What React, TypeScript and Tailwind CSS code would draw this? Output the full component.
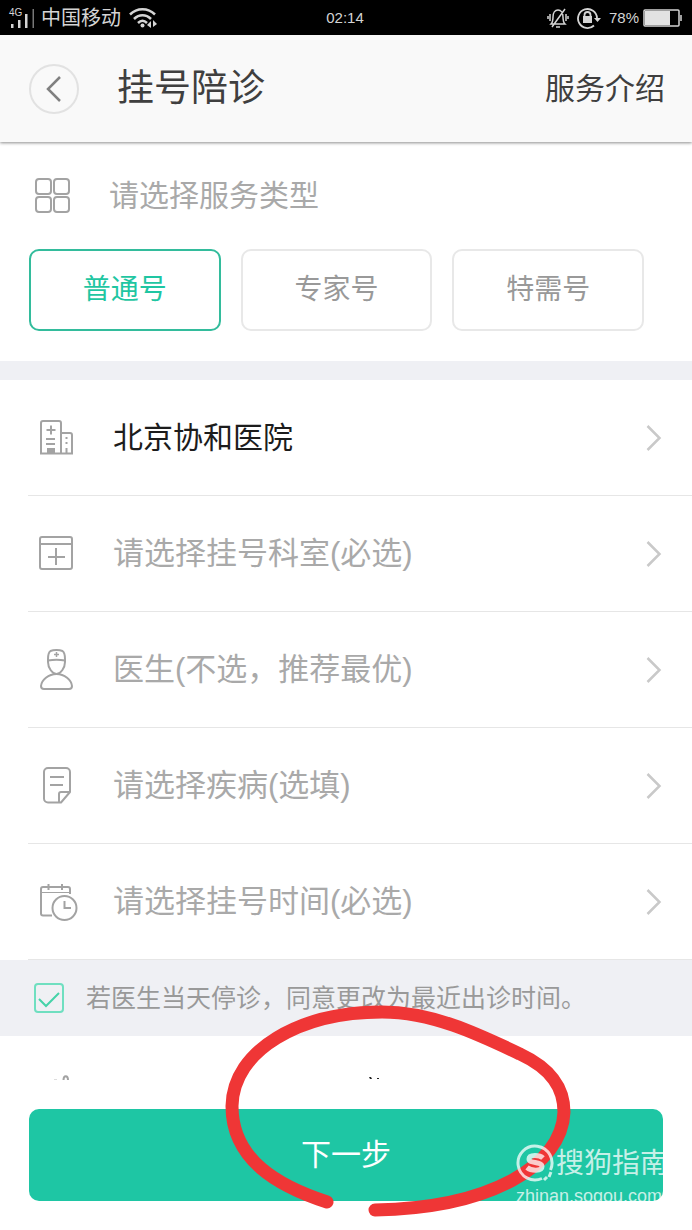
import React, { useState } from 'react'

const SERVICE_TYPES = ['普通号', '专家号', '特需号']

const GridIcon = () => (
  <svg width="36" height="36" viewBox="0 0 36 36" fill="none" stroke="#a3a3a3" strokeWidth="2">
    <rect x="1" y="1" width="15" height="15" rx="3" />
    <rect x="19" y="1" width="15" height="15" rx="3" />
    <rect x="1" y="19" width="15" height="15" rx="3" />
    <rect x="19" y="19" width="15" height="15" rx="3" />
  </svg>
)

const HospitalIcon = () => (
  <svg width="42" height="44" viewBox="0 0 42 44" fill="none" stroke="#a3a3a3" strokeWidth="2">
    <path d="M5 37.500V7a2 2 0 0 1 2-2h16a2 2 0 0 1 2 2v30.500M25 17h9a2 2 0 0 1 2 2v18.500M4 37.500h33" />
    <path d="M15 9.500v9M10.500 14h9M10 23h9M10 28h9" />
    <path d="M11 32h8v5h-8z" fill="#a3a3a3" stroke="none" />
    <path d="M30.500 21v2M30.500 26v2M30.500 32v5" />
  </svg>
)

const DepartmentIcon = () => (
  <svg width="42" height="44" viewBox="0 0 42 44" fill="none" stroke="#a3a3a3" strokeWidth="2">
    <rect x="4" y="5" width="32" height="32" rx="2" />
    <path d="M4 12h32M20 16v17M12 25h17" />
  </svg>
)

const DoctorIcon = () => (
  <svg width="42" height="44" viewBox="0 0 42 44" fill="none" stroke="#a3a3a3" strokeWidth="2">
    <path d="M12 11c0-3 1-7 2.500-8 3-1.200 9-1.200 12 0 1.500 1 2.500 5 2.500 8v3c0 6-4.500 12-8.500 12S12 20 12 14z" />
    <path d="M12 12.500c5-1 12-1 17 0" />
    <path d="M20.500 4v5M18 6.500h5" strokeWidth="1.500" />
    <path d="M20.500 26c8 0 15 6 15.500 12 0 2-1 3-3 3H8c-2 0-3-1-3-3 .500-6 7.500-12 15.500-12z" />
  </svg>
)

const DiseaseIcon = () => (
  <svg width="42" height="44" viewBox="0 0 42 44" fill="none" stroke="#a3a3a3" strokeWidth="2">
    <path d="M23 38.500H12a4 4 0 0 1-4-4V8a4 4 0 0 1 4-4h18a4 4 0 0 1 4 4v20l-9 10.500z" strokeLinejoin="round" />
    <path d="M23 38.500V30a2 2 0 0 1 2-2h9M14 13h14M14 21h13" />
  </svg>
)

const TimeIcon = () => (
  <svg width="42" height="44" viewBox="0 0 42 44" fill="none" stroke="#a3a3a3" strokeWidth="2">
    <path d="M16 35.500H7a2 2 0 0 1-2-2V9a2 2 0 0 1 2-2h25a2 2 0 0 1 2 2v5" />
    <path d="M12.500 4v6M26 4v6" />
    <path d="M5 12.500h29" strokeWidth="1" />
    <circle cx="28.500" cy="28" r="12" />
    <path d="M28.500 21v7H35" />
  </svg>
)

const Chevron = () => (
  <svg width="16" height="28" viewBox="0 0 16 28" fill="none" stroke="#c9c9c9" strokeWidth="2.500">
    <path d="M1.500 2L13.500 14 1.500 26" />
  </svg>
)

const FIELDS = [
  { label: '北京协和医院', icon: HospitalIcon, filled: true },
  { label: '请选择挂号科室(必选)', icon: DepartmentIcon, filled: false },
  { label: '医生(不选，推荐最优)', icon: DoctorIcon, filled: false },
  { label: '请选择疾病(选填)', icon: DiseaseIcon, filled: false },
  { label: '请选择挂号时间(必选)', icon: TimeIcon, filled: false },
]

const StatusBar = () => (
  <div className="grid h-[35px] grid-cols-[1fr_auto_1fr] items-center bg-black pl-2 pr-[10px] text-[#d4d4d4]">
    <div className="flex items-center">
      <svg width="28" height="22" viewBox="0 0 28 22" fill="#d4d4d4">
        <text x="1" y="9" fontSize="10" fontFamily="Liberation Sans, sans-serif">4G</text>
        <path d="M3 17h2.500v4H3zM10 13h2.500v8H10zM17 7h2.500v14H17z" />
        <path d="M24.500 2h1.500v19h-1.500z" fill="#777" />
      </svg>
      <span className="ml-[5px] text-[20px] leading-6">中国移动</span>
      <svg className="ml-2" width="30" height="22" viewBox="0 0 30 22" fill="none" stroke="#d4d4d4" strokeWidth="2.500">
        <path d="M1 7.500c7-7 18-7 25 0M5 12c5-5 12-5 17 0M9 16c3-3 6-3 9 0" />
        <circle cx="13.500" cy="18.500" r="2" fill="#d4d4d4" stroke="none" />
        <path d="M22 14v7l-4-3zM24 13v7l4-3z" fill="#d4d4d4" stroke="none" />
      </svg>
    </div>
    <span className="text-[15px] leading-6">02:14</span>
    <div className="flex items-center justify-end">
      <svg width="22" height="22" viewBox="0 0 22 22" fill="none" stroke="#d4d4d4" strokeWidth="1.500">
        <path d="M4 17c2-2 2-4 2-7 0-4 2-7 5-7s5 3 5 7c0 3 0 5 2 7zM9 20h4M18 2L5 20M3 7v7M1 9v3M19 7v7M21 9v3" />
      </svg>
      <svg className="ml-2" width="24" height="22" viewBox="0 0 24 22" fill="none" stroke="#d4d4d4" strokeWidth="1.800">
        <path d="M17 18.500A9.500 9.500 0 1 1 20 11" />
        <path d="M17 11h7l-3.500 4z" fill="#d4d4d4" stroke="none" />
        <path d="M7.500 9V8a3 3 0 0 1 6 0v1" />
        <path d="M6 9h9v7H6z" fill="#d4d4d4" stroke="none" />
      </svg>
      <span className="ml-2 text-[15px] leading-6">78%</span>
      <svg className="ml-1" width="39" height="18" viewBox="0 0 39 18" fill="none" stroke="#d4d4d4" strokeWidth="1.500">
        <rect x="1" y="1" width="35" height="16" rx="1" />
        <path d="M2 2h25v14H2z" fill="#e2e2e2" stroke="none" />
        <path d="M38 6v6" />
      </svg>
    </div>
  </div>
)

const Watermark = () => (
  <div className="pointer-events-none absolute bottom-[22px] right-6 w-[152px] text-white/75">
    <div className="flex items-center">
      <svg className="shrink-0" width="38" height="40" viewBox="0 0 38 40" fill="none" stroke="currentColor">
        <path d="M26 34.500A17 17 0 1 1 34.500 26" strokeWidth="3" />
        <path d="M27 14c-3-3-14-4-14 1 0 5 13 2 13 7.500 0 5-11 4.500-15 1" strokeWidth="5" />
        <path d="M35 28l-2 5M31 33l-3 3" strokeWidth="3" />
      </svg>
      <span className="ml-[2px] whitespace-nowrap text-[28px] leading-10">搜狗指南</span>
    </div>
    <div className="text-[18px] leading-6">zhinan.sogou.com</div>
  </div>
)

const App: React.FC = () => {
  const [type, setType] = useState(0)
  const [agreed, setAgreed] = useState(true)

  return (
    <div className="relative flex min-h-screen flex-col bg-white font-['Liberation_Sans','Noto_Sans_CJK_SC',sans-serif]">
      <StatusBar />

      <header className="z-10 flex h-[107px] items-center bg-[#f9f9f9] pl-[29px] pr-[27px] text-[#3f3f3f] shadow-[0_1px_3px_rgba(0,0,0,0.45)]">
        <button aria-label="返回" className="flex size-[50px] items-center justify-center rounded-full border-2 border-[#e2e2e2]">
          <svg width="16" height="26" viewBox="0 0 16 26" fill="none" stroke="#808080" strokeWidth="2.500">
            <path d="M14 1L2 13l12 12" />
          </svg>
        </button>
        <h1 className="ml-[38px] text-[37px] leading-[48px]">挂号陪诊</h1>
        <a href="#intro" className="ml-auto text-[30px] leading-9">服务介绍</a>
      </header>

      <main className="flex flex-1 flex-col">
        <section className="pb-[30px] pt-9">
          <div className="flex items-center pl-[35px]">
            <GridIcon />
            <h2 className="ml-[38px] text-[30px] leading-9 text-[#a9a9a9]">请选择服务类型</h2>
          </div>
          <div className="mt-[35px] grid grid-cols-3 gap-5 pl-[29px] pr-12">
            {SERVICE_TYPES.map((name, i) => (
              <button
                key={name}
                onClick={() => setType(i)}
                aria-pressed={type === i}
                className={`h-[82px] rounded-[10px] border-2 text-[28px] leading-9 ${
                  type === i ? 'border-[#33bc9c] text-[#1fc6a2]' : 'border-[#e8e8e8] text-[#999]'
                }`}
              >
                {name}
              </button>
            ))}
          </div>
        </section>

        <div className="h-[19px] bg-[#eff0f4]" />

        <ul className="pl-7">
          {FIELDS.map(({ label, icon: Icon, filled }) => (
            <li key={label} className="border-b border-[#e6e6e6]">
              <button className="flex h-[115px] w-full items-center pl-2 pr-[30px]">
                <Icon />
                <span
                  className={`ml-[35px] ${
                    filled ? 'text-[30px] leading-9 text-[#1c1c1c]' : 'text-[31px] leading-9 text-[#a9a9a9]'
                  }`}
                >
                  {label}
                </span>
                <span className="ml-auto">
                  <Chevron />
                </span>
              </button>
            </li>
          ))}
        </ul>

        <label className="flex h-[76px] items-center bg-[#eff0f4] pl-[34px] text-[25px] leading-8 text-[#999]">
          <span className="relative flex size-[30px]">
            <input
              type="checkbox"
              checked={agreed}
              onChange={(e) => setAgreed(e.target.checked)}
              className="size-[30px] appearance-none rounded-[4px] border-2 border-[#6fdfc0]"
            />
            {agreed && (
              <svg className="pointer-events-none absolute inset-0" width="30" height="30" viewBox="0 0 30 30" fill="none" stroke="#45d3a8" strokeWidth="2">
                <path d="M5 16l7 7L25 10" />
              </svg>
            )}
          </span>
          <span className="ml-[22px]">若医生当天停诊，同意更改为最近出诊时间。</span>
        </label>

        {/* next row, mostly hidden behind the footer */}
        <div className="flex h-11 items-end pl-[52px]">
          <svg width="20" height="5" viewBox="0 0 20 5" fill="none" stroke="#a3a3a3" strokeWidth="2">
            <path d="M11.500 5c0-5 4.500-5 4.500 0" />
            <path d="M2 4.500h3" stroke="#ddd" strokeWidth="1" />
          </svg>
          <svg className="ml-[297px]" width="14" height="3" viewBox="0 0 14 3" fill="#222">
            <path d="M0 0h2l1 2H1zM8 1h2v1H8z" />
          </svg>
        </div>

        <footer className="relative mt-auto bg-white px-[29px] py-[29px]">
          <button className="h-[92px] w-full rounded-[10px] bg-[#1ec6a4] text-[30px] leading-9 text-white">下一步</button>
        </footer>
      </main>

      {/* hand-drawn circle round the submit button */}
      <svg
        className="pointer-events-none absolute bottom-[13px] left-[225px]"
        width="347"
        height="212"
        viewBox="225 1005 347 212"
        fill="none"
        stroke="#ef3636"
        strokeWidth="13"
        strokeLinecap="round"
      >
        <path d="M327 1202C278 1186 232 1160 232 1106C233 1050 300 1012 382 1012C432 1012 478 1034 520 1054C552 1069 564 1088 564 1112C562 1166 490 1208 375 1210" />
      </svg>
      <Watermark />
    </div>
  )
}

export default App
